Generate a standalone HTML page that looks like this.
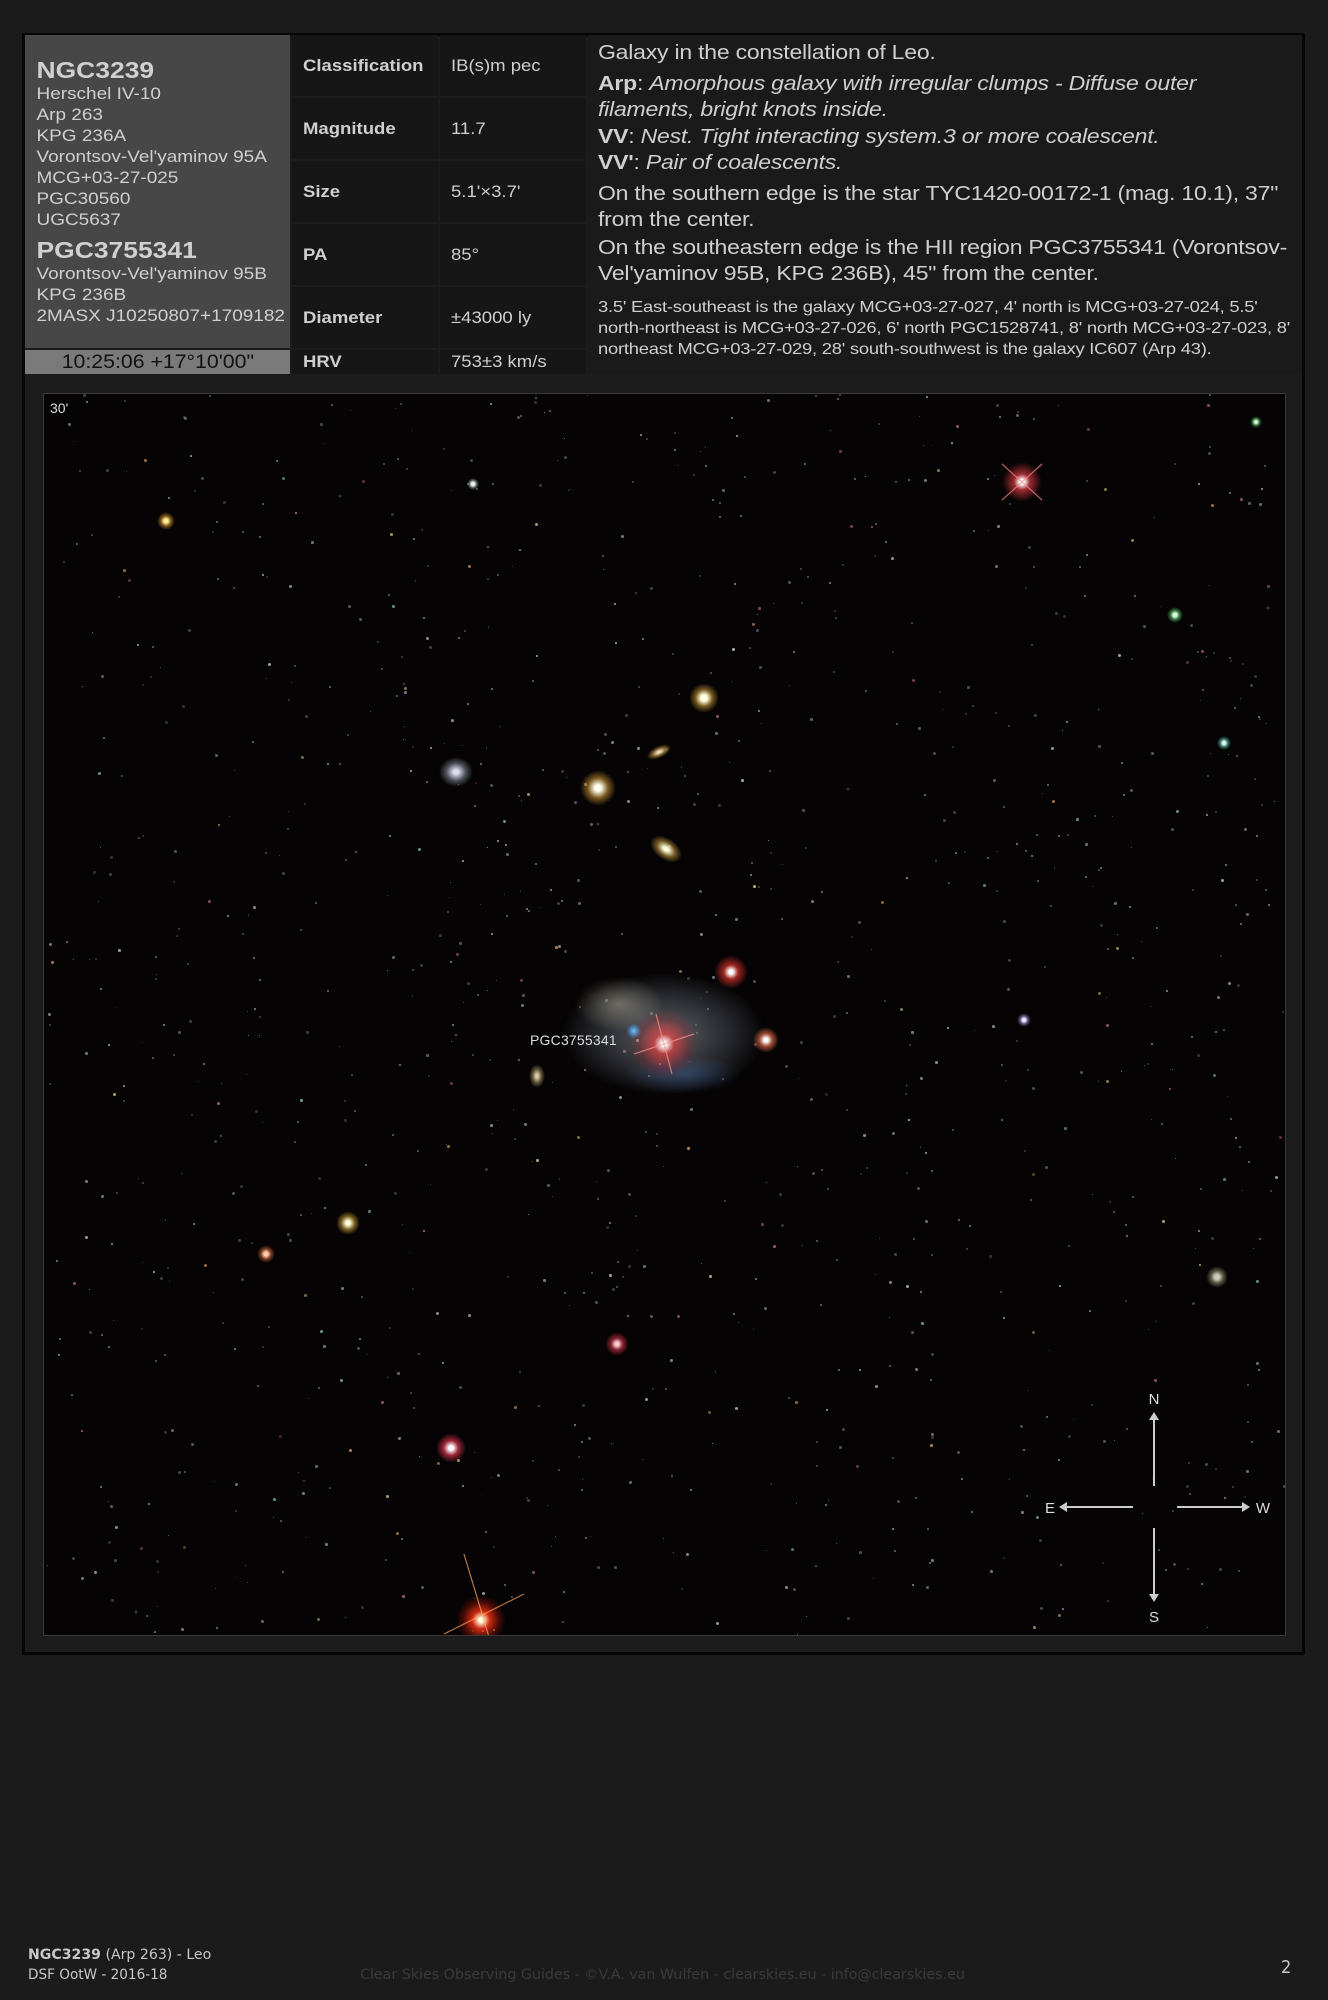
<!DOCTYPE html>
<html><head><meta charset="utf-8">
<style>
html,body{margin:0;padding:0;}
body{width:1328px;height:2000px;background:#1b1b1b;position:relative;overflow:hidden;font-family:"Liberation Sans",Arial,sans-serif;color:#c8c8c8;}
.abs{position:absolute;}
#outer{left:22px;top:33px;width:1283px;height:1622px;background:#1c1c1c;border:3px solid #050505;box-sizing:border-box;}
#left{left:25px;top:35px;width:265px;height:313px;background:#474747;}
#lefttxt{transform:scaleX(1.15);transform-origin:0 0;}
#left div div{font-size:16.5px;line-height:21px;color:#cfcfcf;padding-left:10px;white-space:nowrap;}
#left .t{font-size:23px;font-weight:bold;line-height:28px;color:#d0d0d0;}
#ra{left:25px;top:350px;width:265px;height:24px;background:#7a7a7a;color:#111;font-size:19px;text-align:center;line-height:25px;}
.cell{background:#161616;font-size:17px;color:#cfcfcf;padding-left:11px;box-sizing:border-box;display:flex;align-items:center;}
.cell span{display:inline-block;transform:scaleX(1.09);transform-origin:0 50%;white-space:nowrap;}
.lab{font-weight:bold;}
#img{left:43px;top:393px;width:1243px;height:1243px;background:#050303;overflow:hidden;border:1px solid #3a3a3a;box-sizing:border-box;}
.st{position:absolute;border-radius:50%;transform:translate(-50%,-50%);}
.ft{font-family:"DejaVu Sans Condensed","DejaVu Sans",sans-serif;font-size:14px;transform-origin:0 0;white-space:nowrap;}
.dp{margin:0;font-size:20.3px;line-height:26.5px;color:#cfcfcf;letter-spacing:-0.2px;}
</style></head><body>
<div id="outer" class="abs"></div>
<div id="left" class="abs"><div id="lefttxt">
<div class="t" style="margin-top:21px">NGC3239</div>
<div>Herschel IV-10</div><div>Arp 263</div><div>KPG 236A</div><div>Vorontsov-Vel'yaminov 95A</div><div>MCG+03-27-025</div><div>PGC30560</div><div>UGC5637</div>
<div class="t" style="margin-top:5px">PGC3755341</div>
<div>Vorontsov-Vel'yaminov 95B</div><div>KPG 236B</div><div>2MASX J10250807+1709182</div>
</div></div>
<div id="ra" class="abs"><span style="display:inline-block;transform:scaleX(1.12)">10:25:06 +17°10'00"</span></div>

<div class="abs cell lab" style="left:292px;top:35px;width:146px;height:61px"><span>Classification</span></div>
<div class="abs cell" style="left:440px;top:35px;width:146px;height:61px"><span>IB(s)m pec</span></div>
<div class="abs cell lab" style="left:292px;top:98px;width:146px;height:61px"><span>Magnitude</span></div>
<div class="abs cell" style="left:440px;top:98px;width:146px;height:61px"><span>11.7</span></div>
<div class="abs cell lab" style="left:292px;top:161px;width:146px;height:61px"><span>Size</span></div>
<div class="abs cell" style="left:440px;top:161px;width:146px;height:61px"><span>5.1'×3.7'</span></div>
<div class="abs cell lab" style="left:292px;top:224px;width:146px;height:61px"><span>PA</span></div>
<div class="abs cell" style="left:440px;top:224px;width:146px;height:61px"><span>85°</span></div>
<div class="abs cell lab" style="left:292px;top:287px;width:146px;height:61px"><span>Diameter</span></div>
<div class="abs cell" style="left:440px;top:287px;width:146px;height:61px"><span>±43000 ly</span></div>
<div class="abs cell lab" style="left:292px;top:350px;width:146px;height:24px"><span>HRV</span></div>
<div class="abs cell" style="left:440px;top:350px;width:146px;height:24px"><span>753±3 km/s</span></div>

<div class="abs" style="left:588px;top:35px;width:714px;height:339px;background:#1a1a1a"></div>
<div class="abs" style="left:598px;top:40px;width:617px;transform:scaleX(1.135);transform-origin:0 0">
<p class="dp">Galaxy in the constellation of Leo.</p>
<p class="dp" style="margin-top:4px"><b>Arp</b>: <i>Amorphous galaxy with irregular clumps - Diffuse outer filaments, bright knots inside.</i><br><b>VV</b>: <i>Nest. Tight interacting system.3 or more coalescent.</i><br><b>VV'</b>: <i>Pair of coalescents.</i></p>
<p class="dp" style="margin-top:4px">On the southern edge is the star TYC1420-00172-1 (mag. 10.1), 37" from the center.</p>
<p class="dp" style="margin-top:1px">On the southeastern edge is the HII region PGC3755341 (Vorontsov-Vel'yaminov 95B, KPG 236B), 45" from the center.</p>
</div>
<div class="abs" style="left:598px;top:297px;width:598px;transform:scaleX(1.18);transform-origin:0 0">
<p style="margin:0;font-size:15.6px;line-height:21px;color:#cfcfcf;letter-spacing:-0.2px">3.5' East-southeast is the galaxy MCG+03-27-027, 4' north is MCG+03-27-024, 5.5' north-northeast is MCG+03-27-026, 6' north PGC1528741, 8' north MCG+03-27-023, 8' northeast MCG+03-27-029, 28' south-southwest is the galaxy IC607 (Arp 43).</p>
</div>

<div id="img" class="abs">
<div id="dots"></div>
<div class="st" style="left:620px;top:640px;width:200px;height:120px;background:radial-gradient(ellipse,rgba(170,175,185,.55),rgba(120,130,150,.25) 50%,transparent 72%)"></div>
<div class="st" style="left:575px;top:610px;width:90px;height:55px;background:radial-gradient(ellipse,rgba(200,195,170,.45),transparent 70%)"></div>
<div class="st" style="left:640px;top:680px;width:120px;height:40px;background:radial-gradient(ellipse,rgba(80,130,200,.35),transparent 70%)"></div>
<div class="st" style="left:590px;top:637px;width:14px;height:14px;background:radial-gradient(circle,#6cf,rgba(60,140,230,.3) 60%,transparent)"></div>
<div class="st" style="left:620px;top:650px;width:70px;height:70px;background:radial-gradient(circle,#fff 4%,rgba(255,60,60,.6) 20%,rgba(200,20,30,.2) 50%,transparent 70%)"></div>
<div class="st" style="left:722px;top:646px;width:26px;height:26px;background:radial-gradient(circle,#fff 10%,rgba(255,120,80,.6) 35%,transparent 70%)"></div>
<div class="st" style="left:687px;top:578px;width:34px;height:34px;background:radial-gradient(circle,#fff 8%,rgba(255,60,50,.6) 30%,transparent 70%)"></div>
<div class="st" style="left:978px;top:88px;width:40px;height:40px;background:radial-gradient(circle,#fff 8%,rgba(255,70,80,.6) 28%,transparent 70%)"></div>
<div class="st" style="left:437px;top:1226px;width:50px;height:50px;background:radial-gradient(circle,#ffd 6%,rgba(255,50,20,.8) 25%,rgba(220,30,10,.3) 50%,transparent 70%)"></div>
<div class="st" style="left:407px;top:1054px;width:30px;height:30px;background:radial-gradient(circle,#fff 10%,rgba(255,60,90,.6) 35%,transparent 70%)"></div>
<div class="st" style="left:573px;top:950px;width:24px;height:24px;background:radial-gradient(circle,#fcc 10%,rgba(255,60,90,.5) 35%,transparent 70%)"></div>
<div class="st" style="left:660px;top:304px;width:30px;height:30px;background:radial-gradient(circle,#ffd 15%,rgba(230,170,60,.5) 40%,transparent 70%)"></div>
<div class="st" style="left:554px;top:394px;width:36px;height:36px;background:radial-gradient(circle,#ffe 12%,rgba(230,170,60,.5) 40%,transparent 70%)"></div>
<div class="st" style="left:622px;top:455px;width:36px;height:22px;background:radial-gradient(ellipse,#ffd 10%,rgba(220,170,70,.5) 40%,transparent 70%);transform:translate(-50%,-50%) rotate(35deg)"></div>
<div class="st" style="left:615px;top:358px;width:26px;height:12px;background:radial-gradient(ellipse,#edb 10%,rgba(220,170,70,.5) 40%,transparent 70%);transform:translate(-50%,-50%) rotate(-25deg)"></div>
<div class="st" style="left:412px;top:378px;width:34px;height:30px;background:radial-gradient(ellipse,#dde 10%,rgba(150,160,180,.5) 40%,transparent 70%)"></div>
<div class="st" style="left:493px;top:682px;width:16px;height:24px;background:radial-gradient(ellipse,#dca 10%,rgba(180,160,110,.5) 40%,transparent 70%)"></div>
<div class="st" style="left:304px;top:829px;width:24px;height:24px;background:radial-gradient(circle,#ffd 12%,rgba(230,180,60,.5) 40%,transparent 70%)"></div>
<div class="st" style="left:1173px;top:883px;width:22px;height:22px;background:radial-gradient(circle,#ccb 15%,rgba(170,160,120,.5) 40%,transparent 70%)"></div>
<div class="st" style="left:122px;top:127px;width:18px;height:18px;background:radial-gradient(circle,#fe9 15%,rgba(240,160,50,.5) 40%,transparent 70%)"></div>
<div class="st" style="left:1131px;top:221px;width:16px;height:16px;background:radial-gradient(circle,#dfd 15%,rgba(100,220,120,.5) 40%,transparent 70%)"></div>
<div class="st" style="left:1212px;top:28px;width:12px;height:12px;background:radial-gradient(circle,#dfd 15%,rgba(100,220,120,.5) 40%,transparent 70%)"></div>
<div class="st" style="left:1180px;top:349px;width:14px;height:14px;background:radial-gradient(circle,#dfe 15%,rgba(100,220,200,.5) 40%,transparent 70%)"></div>
<div class="st" style="left:222px;top:860px;width:18px;height:18px;background:radial-gradient(circle,#fca 15%,rgba(240,110,60,.5) 40%,transparent 70%)"></div>
<div class="st" style="left:980px;top:626px;width:14px;height:14px;background:radial-gradient(circle,#eef 15%,rgba(170,150,240,.5) 40%,transparent 70%)"></div>
<div class="st" style="left:429px;top:90px;width:12px;height:12px;background:radial-gradient(circle,#eee 20%,rgba(200,220,220,.4) 45%,transparent 70%)"></div>
<svg class="abs" style="left:0;top:0" width="1243" height="1243">
<g stroke-width="1.2" opacity="0.7">
<line x1="958" y1="70" x2="998" y2="106" stroke="#f88"/><line x1="958" y1="106" x2="998" y2="70" stroke="#f88"/>
<line x1="590" y1="660" x2="650" y2="640" stroke="#f98"/><line x1="612" y1="620" x2="628" y2="680" stroke="#f98"/>
<line x1="400" y1="1240" x2="480" y2="1200" stroke="#fa6"/><line x1="420" y1="1160" x2="445" y2="1243" stroke="#fa6"/>
</g>
</svg>
<div class="abs" style="left:6px;top:6px;font-size:14px;color:#ddd">30'</div>
<div class="abs" style="left:486px;top:638px;font-size:14px;color:#ddd;letter-spacing:0.2px">PGC3755341</div>
<svg class="abs" style="left:0;top:0" width="1243" height="1243">
<g stroke="#ccc" stroke-width="2" fill="#ccc">
<line x1="1110" y1="1092" x2="1110" y2="1022"/><polygon points="1105,1026 1115,1026 1110,1018" stroke="none"/>
<line x1="1110" y1="1134" x2="1110" y2="1205"/><polygon points="1105,1200 1115,1200 1110,1208" stroke="none"/>
<line x1="1089" y1="1113" x2="1019" y2="1113"/><polygon points="1023,1108 1023,1118 1015,1113" stroke="none"/>
<line x1="1133" y1="1113" x2="1202" y2="1113"/><polygon points="1198,1108 1198,1118 1206,1113" stroke="none"/>
</g>
<g fill="#ddd" font-family="Liberation Sans,sans-serif" font-size="15">
<text x="1110" y="1010" text-anchor="middle">N</text>
<text x="1110" y="1228" text-anchor="middle">S</text>
<text x="1006" y="1119" text-anchor="middle">E</text>
<text x="1219" y="1119" text-anchor="middle">W</text>
</g>
</svg>
</div>

<div class="abs ft" style="left:28px;top:1947px;color:#c8c8c8;transform:scaleX(1.12)"><b>NGC3239</b> (Arp 263) - Leo</div>
<div class="abs ft" style="left:28px;top:1967px;color:#c8c8c8;transform:scaleX(1.08)">DSF OotW - 2016-18</div>
<div class="abs ft" style="left:360px;top:1967px;color:#3a3a3a;transform:scaleX(1.13)">Clear Skies Observing Guides - ©V.A. van Wulfen - clearskies.eu - info@clearskies.eu</div>
<div class="abs ft" style="left:1281px;top:1957px;color:#c8c8c8;font-size:18px">2</div>
<script>
(function(){var c=document.getElementById('dots');var s=12345;function r(){s=(s*16807)%2147483647;return s/2147483647;}
var cols=['#a98','#cb8','#886','#c96','#89a','#bbb','#a66','#7a8'];var h='';
for(var i=0;i<1100;i++){var x=r()*1243,y=r()*1243,z=1+r()*2.2,col=cols[Math.floor(r()*cols.length)],o=0.3+r()*0.6;
h+='<div style="position:absolute;left:'+x.toFixed(0)+'px;top:'+y.toFixed(0)+'px;width:'+z.toFixed(1)+'px;height:'+z.toFixed(1)+'px;border-radius:50%;background:'+col+';opacity:'+o.toFixed(2)+'"></div>';}
c.innerHTML=h;})();
</script>
</body></html>
